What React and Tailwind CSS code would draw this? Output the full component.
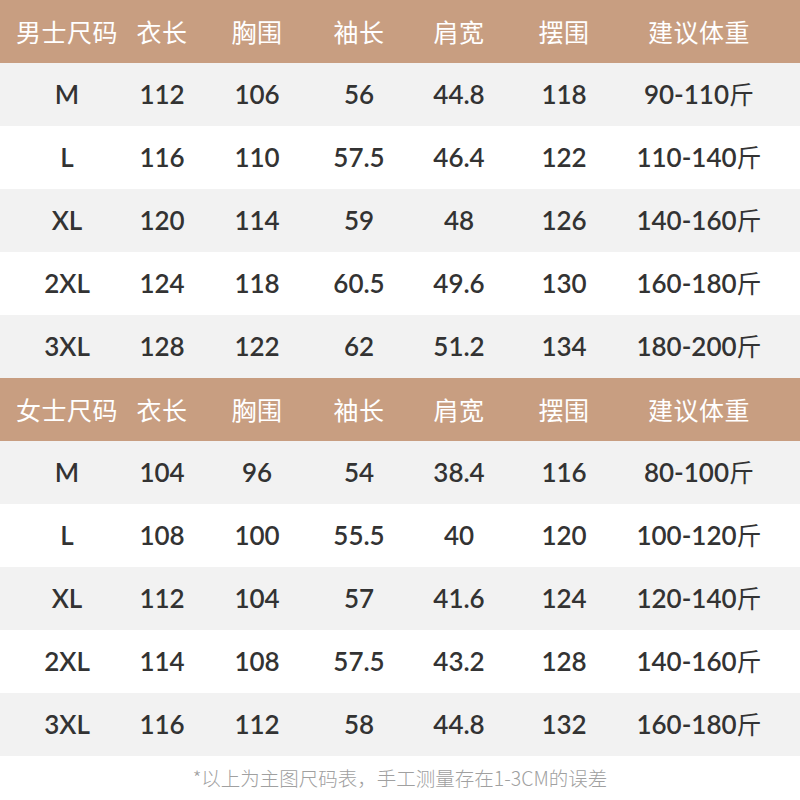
const cols = "grid grid-cols-[134px_56px_134px_70px_130px_80px_190px]";
const heads = ["衣长", "胸围", "袖长", "肩宽", "摆围", "建议体重"];
const men = [
  ["M", "112", "106", "56", "44.8", "118", "90-110"],
  ["L", "116", "110", "57.5", "46.4", "122", "110-140"],
  ["XL", "120", "114", "59", "48", "126", "140-160"],
  ["2XL", "124", "118", "60.5", "49.6", "130", "160-180"],
  ["3XL", "128", "122", "62", "51.2", "134", "180-200"],
];
const women = [
  ["M", "104", "96", "54", "38.4", "116", "80-100"],
  ["L", "108", "100", "55.5", "40", "120", "100-120"],
  ["XL", "112", "104", "57", "41.6", "124", "120-140"],
  ["2XL", "114", "108", "57.5", "43.2", "128", "140-160"],
  ["3XL", "116", "112", "58", "44.8", "132", "160-180"],
];

function Header({ title }) {
  return (
    <div className={`${cols} h-[63px] bg-[#c89e81] items-center text-white text-[25px] font-[Noto_Sans_CJK_SC,sans-serif]`}>
      <div className="text-center tracking-[0.5px]">{title}</div>
      {heads.map((h) => (
        <div key={h} className="text-center whitespace-nowrap tracking-[0.5px]">{h}</div>
      ))}
    </div>
  );
}

function Row({ cells, gray }) {
  return (
    <div
      className={`${cols} h-[63px] items-center text-[#333333] text-[26px] font-semibold ${gray ? "bg-[#f2f2f2]" : "bg-white"} font-[Lato,Noto_Sans_CJK_SC,sans-serif]`}
    >
      {cells.map((c, i) => (
        <div key={i} className="text-center whitespace-nowrap">
          {c}
          {i === 6 && (
            <span className="font-normal text-[25px] font-[Noto_Sans_CJK_SC,sans-serif]">斤</span>
          )}
        </div>
      ))}
    </div>
  );
}

function Table({ title, rows }) {
  return (
    <div>
      <Header title={title} />
      {rows.map((r, i) => (
        <Row key={i} cells={r} gray={i % 2 === 0} />
      ))}
    </div>
  );
}

export default function App() {
  return (
    <div className="w-[800px] h-[800px] bg-white overflow-hidden">
      <Table title="男士尺码" rows={men} />
      <Table title="女士尺码" rows={women} />
      <div className="h-[44px] flex items-center justify-center text-[19.5px] font-light text-[#a0a0a0] font-[Noto_Sans_CJK_SC,sans-serif]">
        *以上为主图尺码表，手工测量存在1-3CM的误差
      </div>
    </div>
  );
}
